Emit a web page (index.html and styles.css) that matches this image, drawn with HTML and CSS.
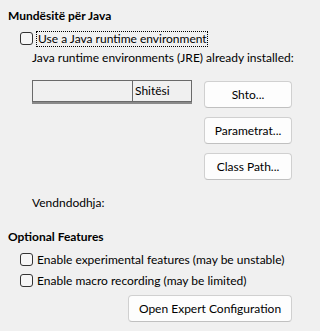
FILE: index.html
```html
<!DOCTYPE html>
<html>
<head>
<meta charset="utf-8">
<link rel="stylesheet" href="styles.css">
</head>
<body>
<div class="panel">
  <div class="heading">Mundësitë për Java</div>
  <div class="check-row first">
    <span class="box"></span>
    <span class="label focus">Use a Java runtime environment</span>
  </div>
  <div class="sub text-line jre">Java runtime environments (JRE) already installed:</div>
  <div class="jre-row">
    <div class="table">
      <div class="thead">
        <div class="th th-blank"></div>
        <div class="th">Shitësi</div>
      </div>
    </div>
    <div class="buttons">
      <button class="btn">Shto...</button>
      <button class="btn">Parametrat...</button>
      <button class="btn">Class Path...</button>
    </div>
  </div>
  <div class="sub text-line location">Vendndodhja:</div>
  <div class="heading optional">Optional Features</div>
  <div class="check-row opt1">
    <span class="box"></span>
    <span class="label">Enable experimental features (may be unstable)</span>
  </div>
  <div class="check-row opt2">
    <span class="box"></span>
    <span class="label">Enable macro recording (may be limited)</span>
  </div>
  <div class="expert-row">
    <button class="btn expert">Open Expert Configuration</button>
  </div>
</div>
</body>
</html>
```
FILE: styles.css
```css
html, body {
  margin: 0;
  padding: 0;
  background: #f0f0f0;
}
body {
  font-family: "Lato", "Noto Sans", sans-serif;
  font-size: 12px;
  color: #000;
  width: 301px;
  height: 331px;
  overflow: hidden;
}
.panel {
  padding: 8px 9px 0 8px;
}
.heading {
  font-weight: bold;
  line-height: 16px;
  height: 16px;
}
.check-row {
  display: flex;
  align-items: center;
  margin-left: 12px;
  height: 15px;
  line-height: 15px;
}
.check-row.first { margin-top: 7px; }
.box {
  width: 11px;
  height: 11px;
  border: 1px solid #333;
  border-radius: 3px;
  background: #f6f6f6;
  flex: none;
}
.label {
  margin-left: 4px;
  white-space: nowrap;
}
.focus {
  margin-left: 3px;
  padding: 0 0 0 1px;
  border: 1px dotted #000;
  line-height: 14px;
}
.text-line {
  line-height: 16px;
  height: 16px;
  white-space: nowrap;
}
.sub { margin-left: 24px; }
.jre { margin-top: 4px; }
.jre-row {
  display: flex;
  align-items: flex-start;
  margin-left: 24px;
  margin-top: 14px;
  gap: 12px;
}
.table {
  width: 160px;
  border-bottom: 2px solid #8a8a8a;
  flex: none;
}
.thead {
  display: flex;
  height: 20px;
  border: 1px solid #6a6a6a;
}
.th {
  line-height: 20px;
  padding-left: 2px;
  white-space: nowrap;
}
.th-blank {
  width: 97px;
  border-right: 1px solid #6a6a6a;
}
.buttons {
  display: flex;
  flex-direction: column;
  gap: 9px;
  margin-top: 1px;
}
.btn {
  font: inherit;
  color: #000;
  background: #fdfdfd;
  border: 1px solid #d0d0d0;
  border-bottom-color: #c0c0c0;
  border-radius: 4px;
  height: 27px;
  padding: 0;
  width: 88px;
}
.location { margin-top: 15px; }
.heading.optional { margin-top: 18px; }
.check-row.opt1 { margin-top: 6px; height: 16px; }
.check-row.opt2 { margin-top: 5px; height: 16px; }
.expert-row {
  display: flex;
  justify-content: flex-end;
  margin-top: 7px;
}
.btn.expert { width: 164px; }
```
